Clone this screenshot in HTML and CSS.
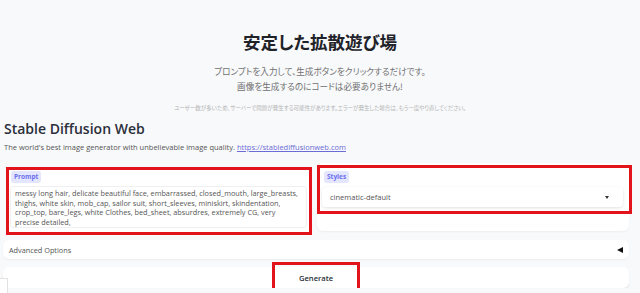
FILE: index.html
```html
<!DOCTYPE html>
<html lang="ja">
<head>
    <meta charset="UTF-8">
    <meta name="viewport" content="width=device-width, initial-scale=1.0">
    <title>Stable Diffusion Web</title>
    <link rel="stylesheet" href="styles.css">
</head>
<body>
    <header class="hero">
        <h1>安定した拡散遊び場</h1>
        <p class="lead">プロンプトを入力して、生成ボタンをクリックするだけです。<br>画像を生成するのにコードは必要ありません!</p>
        <p class="note">ユーザー数が多いため、サーバーで問題が発生する可能性があります。エラーが発生した場合は、もう一度やり直してください。</p>
    </header>

    <main class="app">
        <h2>Stable Diffusion Web</h2>
        <p class="desc">The world's best image generator with unbelievable image quality. <a href="#">https://stablediffusionweb.com</a></p>

        <div class="row">
            <div class="prompt-box marked">
                <span class="tag">Prompt</span>
                <div class="prompt-text">messy long hair, delicate beautiful face, embarrassed, closed_mouth, large_breasts,
thighs, white skin, mob_cap, sailor suit, short_sleeves, miniskirt, skindentation,
crop_top, bare_legs, white Clothes, bed_sheet, absurdres, extremely CG, very
precise detailed,</div>
            </div>
            <div class="card styles-card">
                <div class="field marked-outline">
                    <span class="tag">Styles</span>
                    <div class="select">
                        <span>cinematic-default</span>
                        <span class="caret"></span>
                    </div>
                </div>
            </div>
        </div>

        <div class="card advanced">
            <span>Advanced Options</span>
            <span class="arrow"></span>
        </div>

        <div class="card generate">
            <span class="gen-label marked-outline">Generate</span>
        </div>
    </main>

    <div class="corner"></div>
</body>
</html>
```

FILE: styles.css
```css
body {
    margin: 0;
    background: #f8f9fb;
    font-family: 'Open Sans', sans-serif;
    color: #333;
    overflow: hidden;
}
.hero {
    text-align: center;
    padding-top: 31px;
    font-family: 'Noto Sans CJK JP', sans-serif;
    font-feature-settings: "palt";
}
.hero h1 {
    margin: 0;
    font-size: 17.5px;
    line-height: 22px;
    font-weight: bold;
    color: #1f2329;
}
.lead {
    margin: 11px 0 0;
    font-size: 8.6px;
    line-height: 15px;
    color: #707070;
}
.note {
    margin: 10px 0 0;
    font-size: 5.5px;
    line-height: 9px;
    color: #b4b4b4;
}
.app {
    padding: 0 11px 0 3px;
}
.app h2 {
    margin: 7px 0 0 1px;
    font-size: 14px;
    line-height: 18px;
    font-weight: 600;
    color: #2b2f3a;
}
.desc {
    margin: 4px 0 0 1px;
    font-size: 7.5px;
    line-height: 10px;
    color: #555;
}
.desc a {
    color: #6b6bd6;
}
.row {
    display: grid;
    grid-template-columns: 314px 1fr;
    align-items: start;
    margin-top: 11px;
}
.card {
    background: #fff;
    border-radius: 6px;
    box-shadow: 0 1px 2px rgba(0, 0, 0, 0.05);
}
.marked {
    border: 3px solid #e3131b;
}
.marked-outline {
    outline: 3px solid #e3131b;
    outline-offset: 0;
}
.prompt-box {
    display: flex;
    flex-direction: column;
    align-items: flex-start;
    margin: 4px 0 0 3px;
    width: 297px;
    background: #fff;
    padding: 1px 2px 4px 1px;
}
.tag {
    display: inline-block;
    margin-left: 1px;
    padding: 0 3px;
    height: 12px;
    line-height: 12px;
    font-size: 6.5px;
    font-weight: bold;
    color: #6c6ff0;
    background: #e3e6fd;
    border-radius: 3px;
}
.prompt-text {
    align-self: stretch;
    margin-top: 3px;
    height: 38px;
    padding: 2px 3px 0 4px;
    border: 1px solid #f0f0f2;
    border-radius: 3px;
    white-space: pre;
    overflow: hidden;
    font-size: 7.3px;
    line-height: 9.7px;
    color: #555;
}
.styles-card {
    height: 68px;
}
.field {
    display: flex;
    flex-direction: column;
    align-items: flex-start;
    margin: 5px 0 0 3px;
    padding: 3px 6px 4px 3px;
}
.select {
    align-self: stretch;
    margin: 4px 0 0 -1px;
    height: 20px;
    display: flex;
    align-items: center;
    justify-content: space-between;
    padding: 0 14px 0 8px;
    background: #fff;
    border-radius: 4px;
    box-shadow: 0 1px 3px rgba(0, 0, 0, 0.12);
    font-size: 7.5px;
    color: #555;
}
.caret {
    width: 0;
    height: 0;
    border-left: 2px solid transparent;
    border-right: 2px solid transparent;
    border-top: 3px solid #333;
}
.advanced {
    margin-top: 5px;
    height: 19px;
    display: flex;
    align-items: center;
    justify-content: space-between;
    padding: 0 6px;
    font-size: 7.3px;
    color: #555;
}
.arrow {
    width: 0;
    height: 0;
    border-top: 3px solid transparent;
    border-bottom: 3px solid transparent;
    border-right: 6px solid #111;
}
.generate {
    margin-top: 8px;
    height: 21px;
    display: flex;
    align-items: center;
    justify-content: center;
    box-shadow: 0 2px 2px rgba(0, 0, 0, 0.08);
}
.gen-label {
    height: 26px;
    line-height: 26px;
    padding: 0 24px;
    font-size: 7.6px;
    font-weight: 600;
    color: #2b2f3a;
}
.corner {
    position: absolute;
    left: -2px;
    top: 278px;
    width: 8px;
    height: 20px;
    background: #fff;
    border: 1px solid #e2e2e2;
}
```
